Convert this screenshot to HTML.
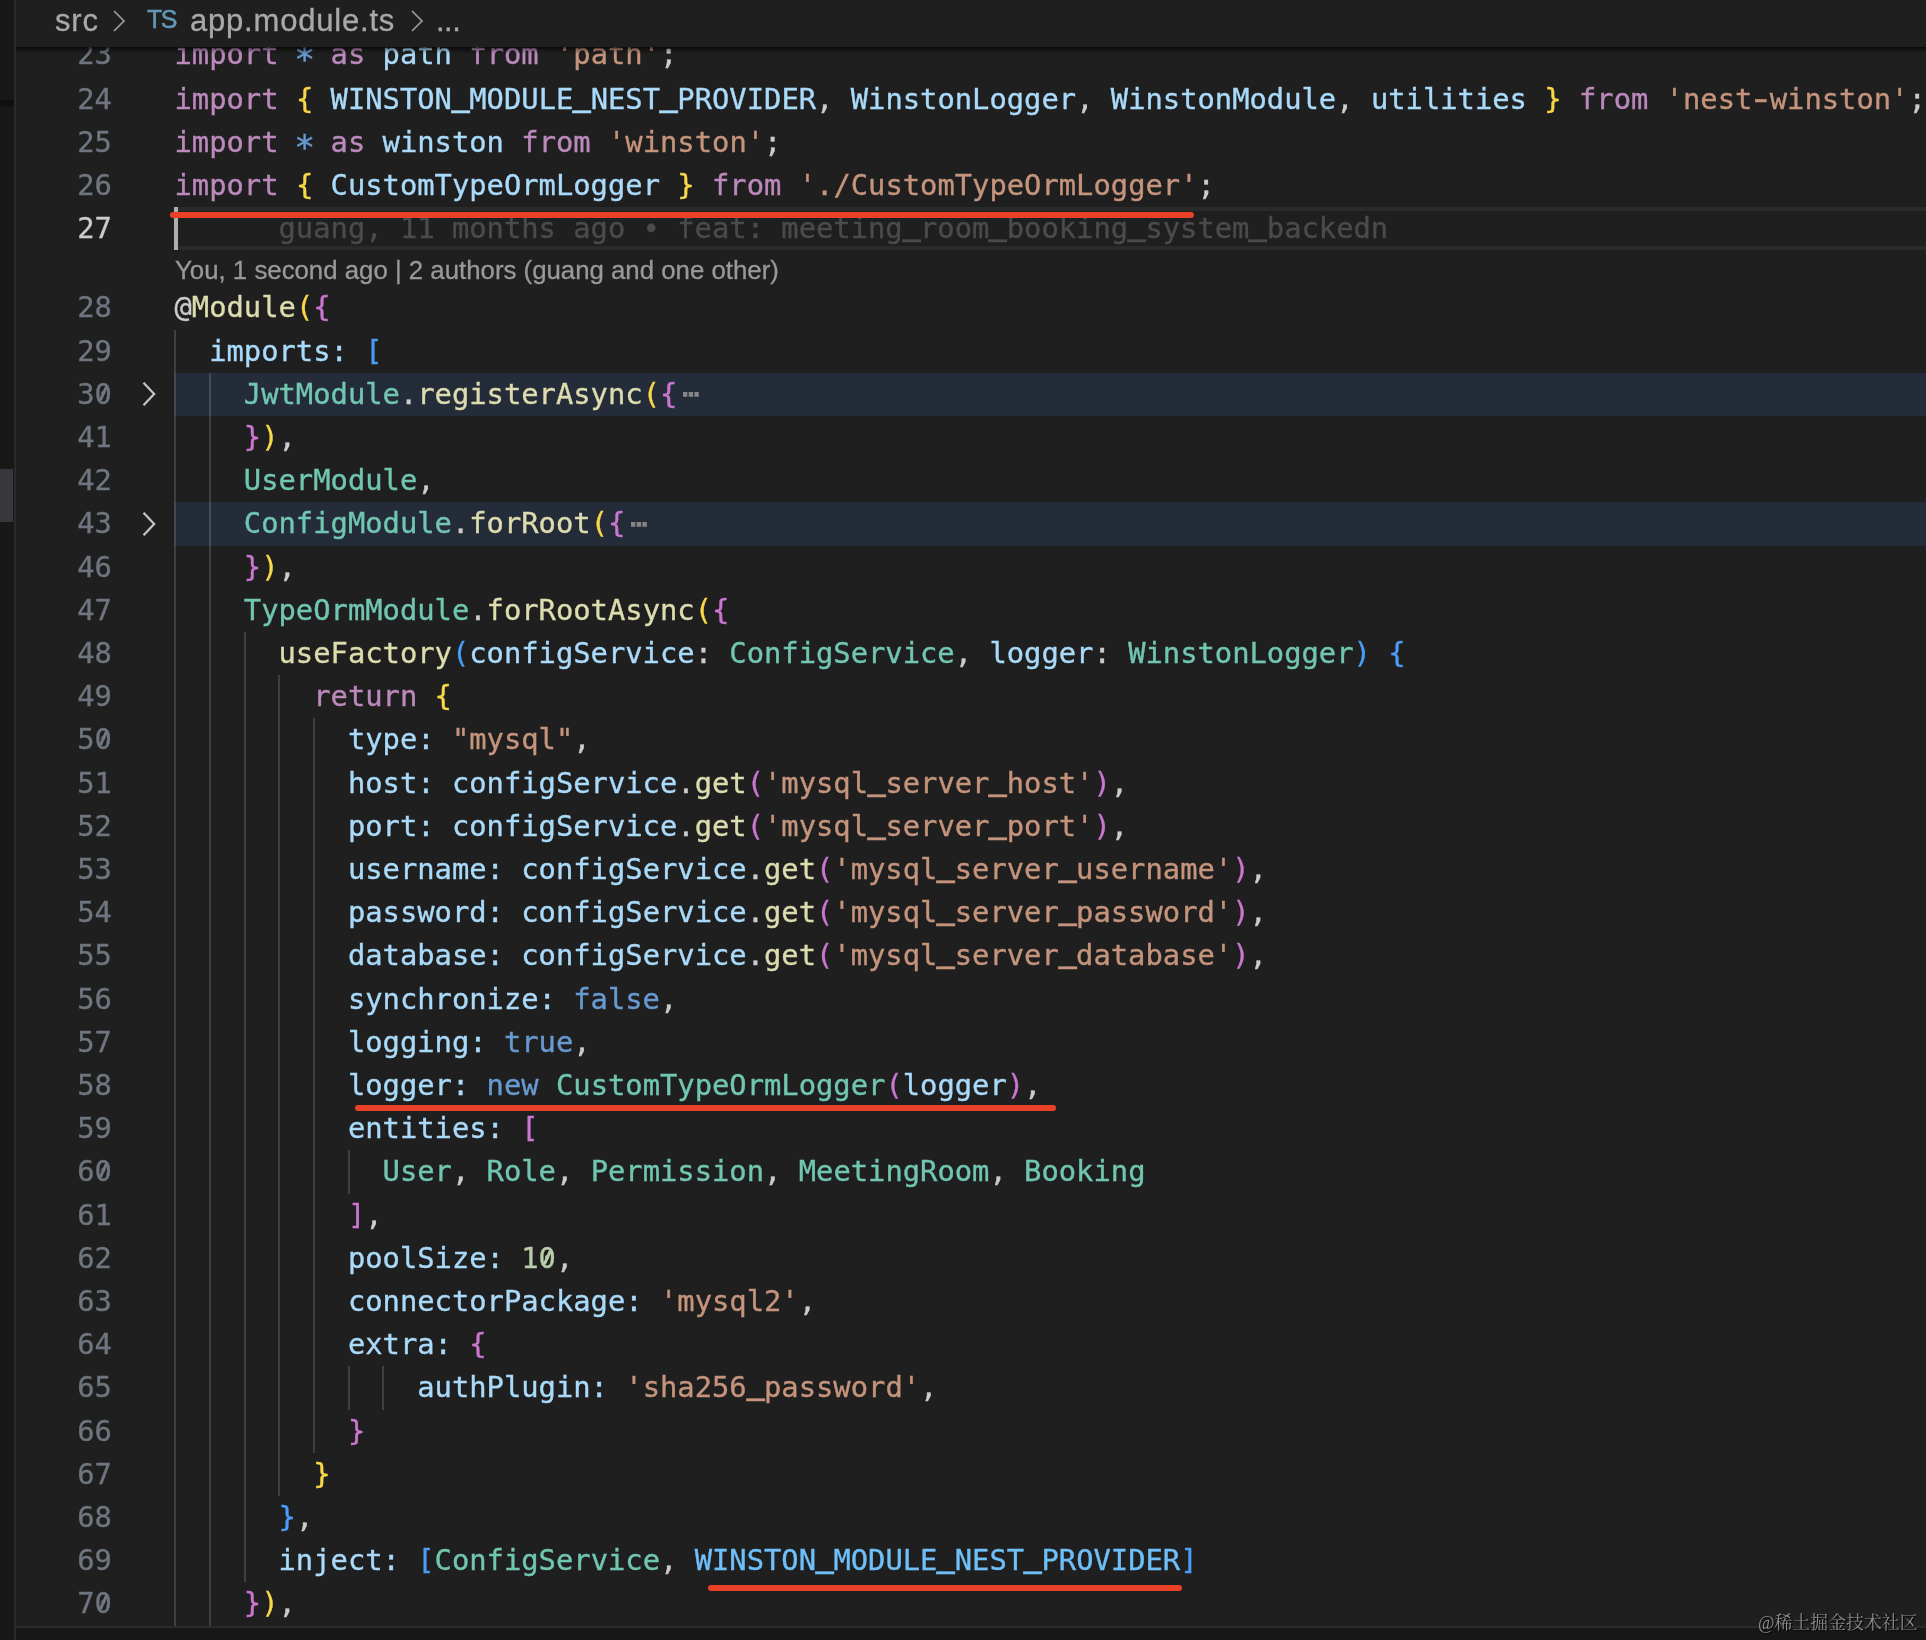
<!DOCTYPE html>
<html lang="en"><head><meta charset="utf-8"><title>app.module.ts</title>
<style>
html,body{margin:0;padding:0;background:#1f1f1f;}
body{width:1926px;height:1640px;position:relative;overflow:hidden;font-family:"DejaVu Sans Mono","Liberation Mono",monospace;}
#side{position:absolute;left:0;top:0;width:14px;height:1640px;background:#181818;border-right:2px solid #2b2b2b;}
#side .hl{position:absolute;left:0;top:100px;width:14px;height:7px;background:linear-gradient(#0e0e0e,#131313);}
#side .blk{position:absolute;left:0;top:469px;width:13px;height:53px;background:#37373d;}
#ed{position:absolute;left:16px;top:0;width:1910px;height:1626px;background:#1f1f1f;overflow:hidden;}
#code{will-change:transform;position:absolute;left:-16px;top:0;width:1926px;height:1626px;}
.row,.ln{z-index:2}
.row{position:absolute;-webkit-text-stroke:0.35px;left:174.5px;height:43.2px;line-height:43.2px;font-size:28.8px;white-space:pre;color:#ccc;letter-spacing:0;}
.ln{position:absolute;-webkit-text-stroke:0.3px;left:39.4px;width:72.5px;height:43.2px;line-height:43.2px;font-size:28.8px;text-align:right;color:#6f7680;}
.ln.cur{color:#ccc;}
.lens{-webkit-text-stroke:0.3px;position:absolute;left:175px;height:35.2px;line-height:39px;font-size:25.8px;color:#999;font-family:"Liberation Sans",sans-serif;white-space:pre;}
.foldbg{z-index:0;position:absolute;left:174px;right:0;height:43.2px;background:#252c39;}
.chev{position:absolute;left:139px;}
.dots{position:absolute;z-index:2;}
.curline{position:absolute;left:174px;right:0;height:43px;box-sizing:border-box;border-top:4px solid #2a2a2a;border-bottom:4px solid #2a2a2a;}
.cursor{position:absolute;left:174px;width:4px;height:43px;background:#aeafad;}
.guide{z-index:1;position:absolute;width:2px;background:rgba(255,255,255,.145);}
.fold{font-style:normal;color:#8b8b8b;font-size:30px;margin-left:3px;-webkit-text-stroke:1px;display:inline-block;line-height:20px;vertical-align:3px;}
.us{font-weight:normal;display:inline-block;transform-origin:50% 39.7px;transform:scale(1.08,2);}
.z{position:relative;display:inline-block;font-weight:normal;}
.z::after{content:"";position:absolute;left:50%;top:20px;width:2.8px;height:14.6px;margin:-7.3px 0 0 -1.4px;background:currentColor;transform:rotate(23.8deg);border-radius:1px;}
.hy{font-weight:normal;display:inline-block;transform:scale(1.5,1.15);}
.as{font-weight:normal;display:inline-block;transform-origin:50% 50%;transform:translateY(5.5px) scale(1.2);}
.k{color:#bc89bd}.v{color:#aadafa}.c{color:#6fbff9}.s{color:#c5947c}.f{color:#dcdcaf}.t{color:#71c6b1}
.b{color:#679ad1}.n{color:#bacdab}.p{color:#ccc}.g{color:#f9d849}.m{color:#cc76d1}.u{color:#4a9df8}.d{color:#4b4b4b}
#bc{will-change:transform;z-index:10;-webkit-text-stroke:0.3px;position:absolute;left:16px;top:0;width:1910px;height:47px;background:#1f1f1f;font-family:"Liberation Sans",sans-serif;color:#a9a9a9;font-size:31px;line-height:42px;letter-spacing:0.8px;}
#bcsh{position:absolute;z-index:9;left:16px;top:47px;width:1910px;height:7px;background:linear-gradient(rgba(0,0,0,.7),rgba(0,0,0,.3) 40%,rgba(0,0,0,0));}
#bc span{position:absolute;top:0;white-space:pre;}
.red{position:absolute;height:6px;border-radius:3px;background:#e84127;z-index:3}
#bottom{z-index:10;position:absolute;left:16px;top:1626px;width:1910px;height:14px;background:#181818;border-top:2px solid #2b2b2b;box-sizing:border-box;}
#wm{will-change:transform;z-index:11;position:absolute;right:8px;top:1607.5px;font-family:"Liberation Serif","Noto Serif CJK SC",serif;font-size:17.9px;line-height:30px;color:#8c8c8c;text-shadow:1px 1px 1px #000;white-space:pre;}
</style></head><body>
<div id="side"><div class="hl"></div><div class="blk"></div></div>
<div id="ed"><div id="code">
<div class="guide " style="left:174.2px;top:329.6px;height:1296.0px"></div>
<div class="guide " style="left:208.9px;top:372.8px;height:1252.8px"></div>
<div class="guide " style="left:243.6px;top:632.0px;height:950.4px"></div>
<div class="guide " style="left:278.2px;top:675.2px;height:820.8px"></div>
<div class="guide " style="left:312.9px;top:718.4px;height:734.4px"></div>
<div class="guide " style="left:347.6px;top:1150.4px;height:43.2px"></div>
<div class="guide " style="left:347.6px;top:1366.4px;height:43.2px"></div>
<div class="guide " style="left:382.3px;top:1366.4px;height:43.2px"></div>
<div class="ln" style="top:33.4px">23</div><div class="row" style="top:33.4px"><span class="k">import</span><span class="p"> </span><span class="b"><b class="as">*</b></span><span class="p"> </span><span class="k">as</span><span class="p"> </span><span class="v">path</span><span class="p"> </span><span class="k">from</span><span class="p"> </span><span class="s">'path'</span><span class="p">;</span></div>
<div class="ln" style="top:77.8px">24</div><div class="row" style="top:77.8px"><span class="k">import</span><span class="p"> </span><span class="g">{</span><span class="p"> </span><span class="v">WINSTON<b class="us">_</b>MODULE<b class="us">_</b>NEST<b class="us">_</b>PROVIDER</span><span class="p">, </span><span class="v">WinstonLogger</span><span class="p">, </span><span class="v">WinstonModule</span><span class="p">, </span><span class="v">utilities</span><span class="p"> </span><span class="g">}</span><span class="p"> </span><span class="k">from</span><span class="p"> </span><span class="s">'nest<b class="hy">-</b>winston'</span><span class="p">;</span></div>
<div class="ln" style="top:121.0px">25</div><div class="row" style="top:121.0px"><span class="k">import</span><span class="p"> </span><span class="b"><b class="as">*</b></span><span class="p"> </span><span class="k">as</span><span class="p"> </span><span class="v">winston</span><span class="p"> </span><span class="k">from</span><span class="p"> </span><span class="s">'winston'</span><span class="p">;</span></div>
<div class="ln" style="top:164.2px">26</div><div class="row" style="top:164.2px"><span class="k">import</span><span class="p"> </span><span class="g">{</span><span class="p"> </span><span class="v">CustomTypeOrmLogger</span><span class="p"> </span><span class="g">}</span><span class="p"> </span><span class="k">from</span><span class="p"> </span><span class="s">'./CustomTypeOrmLogger'</span><span class="p">;</span></div>
<div class="curline" style="top:207px"></div><div class="cursor" style="top:207px"></div><div class="ln cur" style="top:207.4px">27</div><div class="row" style="top:207.4px"><span class="p">      </span><span class="d">guang, 11 months ago • feat: meeting<b class="us">_</b>room<b class="us">_</b>booking<b class="us">_</b>system<b class="us">_</b>backedn</span></div>
<div class="lens" style="top:250.6px">You, 1 second ago | 2 authors (guang and one other)</div>
<div class="ln" style="top:286.4px">28</div><div class="row" style="top:286.4px"><span class="p">@</span><span class="f">Module</span><span class="g">(</span><span class="m">{</span></div>
<div class="ln" style="top:329.6px">29</div><div class="row" style="top:329.6px">  <span class="v">imports:</span><span class="p"> </span><span class="u">[</span></div>
<div class="foldbg" style="top:372.8px"></div><svg class="chev" style="top:379.4px" width="24" height="30" viewBox="0 0 24 30"><path d="M4.5 3.8 L15.2 15 L4.5 26.2" fill="none" stroke="#c5c5c5" stroke-width="2.2"/></svg><svg class="dots" style="left:683.4px;top:392.2px" width="16" height="5" viewBox="0 0 16 5"><rect x="0" y="0" width="4.4" height="4.8" fill="#868686"/><rect x="5.7" y="0" width="4.4" height="4.8" fill="#868686"/><rect x="11.4" y="0" width="4.4" height="4.8" fill="#868686"/></svg><div class="ln" style="top:372.8px">3<b class="z">0</b></div><div class="row" style="top:372.8px">    <span class="t">JwtModule</span><span class="p">.</span><span class="f">registerAsync</span><span class="g">(</span><span class="m">{</span></div>
<div class="ln" style="top:416.0px">41</div><div class="row" style="top:416.0px">    <span class="m">}</span><span class="g">)</span><span class="p">,</span></div>
<div class="ln" style="top:459.2px">42</div><div class="row" style="top:459.2px">    <span class="t">UserModule</span><span class="p">,</span></div>
<div class="foldbg" style="top:502.4px"></div><svg class="chev" style="top:509.0px" width="24" height="30" viewBox="0 0 24 30"><path d="M4.5 3.8 L15.2 15 L4.5 26.2" fill="none" stroke="#c5c5c5" stroke-width="2.2"/></svg><svg class="dots" style="left:631.3px;top:521.8px" width="16" height="5" viewBox="0 0 16 5"><rect x="0" y="0" width="4.4" height="4.8" fill="#868686"/><rect x="5.7" y="0" width="4.4" height="4.8" fill="#868686"/><rect x="11.4" y="0" width="4.4" height="4.8" fill="#868686"/></svg><div class="ln" style="top:502.4px">43</div><div class="row" style="top:502.4px">    <span class="t">ConfigModule</span><span class="p">.</span><span class="f">forRoot</span><span class="g">(</span><span class="m">{</span></div>
<div class="ln" style="top:545.6px">46</div><div class="row" style="top:545.6px">    <span class="m">}</span><span class="g">)</span><span class="p">,</span></div>
<div class="ln" style="top:588.8px">47</div><div class="row" style="top:588.8px">    <span class="t">TypeOrmModule</span><span class="p">.</span><span class="f">forRootAsync</span><span class="g">(</span><span class="m">{</span></div>
<div class="ln" style="top:632.0px">48</div><div class="row" style="top:632.0px">      <span class="f">useFactory</span><span class="u">(</span><span class="v">configService</span><span class="p">: </span><span class="t">ConfigService</span><span class="p">, </span><span class="v">logger</span><span class="p">: </span><span class="t">WinstonLogger</span><span class="u">)</span><span class="p"> </span><span class="u">{</span></div>
<div class="ln" style="top:675.2px">49</div><div class="row" style="top:675.2px">        <span class="k">return</span><span class="p"> </span><span class="g">{</span></div>
<div class="ln" style="top:718.4px">5<b class="z">0</b></div><div class="row" style="top:718.4px">          <span class="v">type:</span><span class="p"> </span><span class="s">"mysql"</span><span class="p">,</span></div>
<div class="ln" style="top:761.6px">51</div><div class="row" style="top:761.6px">          <span class="v">host:</span><span class="p"> </span><span class="v">configService</span><span class="p">.</span><span class="f">get</span><span class="m">(</span><span class="s">'mysql<b class="us">_</b>server<b class="us">_</b>host'</span><span class="m">)</span><span class="p">,</span></div>
<div class="ln" style="top:804.8px">52</div><div class="row" style="top:804.8px">          <span class="v">port:</span><span class="p"> </span><span class="v">configService</span><span class="p">.</span><span class="f">get</span><span class="m">(</span><span class="s">'mysql<b class="us">_</b>server<b class="us">_</b>port'</span><span class="m">)</span><span class="p">,</span></div>
<div class="ln" style="top:848.0px">53</div><div class="row" style="top:848.0px">          <span class="v">username:</span><span class="p"> </span><span class="v">configService</span><span class="p">.</span><span class="f">get</span><span class="m">(</span><span class="s">'mysql<b class="us">_</b>server<b class="us">_</b>username'</span><span class="m">)</span><span class="p">,</span></div>
<div class="ln" style="top:891.2px">54</div><div class="row" style="top:891.2px">          <span class="v">password:</span><span class="p"> </span><span class="v">configService</span><span class="p">.</span><span class="f">get</span><span class="m">(</span><span class="s">'mysql<b class="us">_</b>server<b class="us">_</b>password'</span><span class="m">)</span><span class="p">,</span></div>
<div class="ln" style="top:934.4px">55</div><div class="row" style="top:934.4px">          <span class="v">database:</span><span class="p"> </span><span class="v">configService</span><span class="p">.</span><span class="f">get</span><span class="m">(</span><span class="s">'mysql<b class="us">_</b>server<b class="us">_</b>database'</span><span class="m">)</span><span class="p">,</span></div>
<div class="ln" style="top:977.6px">56</div><div class="row" style="top:977.6px">          <span class="v">synchronize:</span><span class="p"> </span><span class="b">false</span><span class="p">,</span></div>
<div class="ln" style="top:1020.8px">57</div><div class="row" style="top:1020.8px">          <span class="v">logging:</span><span class="p"> </span><span class="b">true</span><span class="p">,</span></div>
<div class="ln" style="top:1064.0px">58</div><div class="row" style="top:1064.0px">          <span class="v">logger:</span><span class="p"> </span><span class="b">new</span><span class="p"> </span><span class="t">CustomTypeOrmLogger</span><span class="m">(</span><span class="v">logger</span><span class="m">)</span><span class="p">,</span></div>
<div class="ln" style="top:1107.2px">59</div><div class="row" style="top:1107.2px">          <span class="v">entities:</span><span class="p"> </span><span class="m">[</span></div>
<div class="ln" style="top:1150.4px">6<b class="z">0</b></div><div class="row" style="top:1150.4px">            <span class="t">User</span><span class="p">, </span><span class="t">Role</span><span class="p">, </span><span class="t">Permission</span><span class="p">, </span><span class="t">MeetingRoom</span><span class="p">, </span><span class="t">Booking</span></div>
<div class="ln" style="top:1193.6px">61</div><div class="row" style="top:1193.6px">          <span class="m">]</span><span class="p">,</span></div>
<div class="ln" style="top:1236.8px">62</div><div class="row" style="top:1236.8px">          <span class="v">poolSize:</span><span class="p"> </span><span class="n">1<b class="z">0</b></span><span class="p">,</span></div>
<div class="ln" style="top:1280.0px">63</div><div class="row" style="top:1280.0px">          <span class="v">connectorPackage:</span><span class="p"> </span><span class="s">'mysql2'</span><span class="p">,</span></div>
<div class="ln" style="top:1323.2px">64</div><div class="row" style="top:1323.2px">          <span class="v">extra:</span><span class="p"> </span><span class="m">{</span></div>
<div class="ln" style="top:1366.4px">65</div><div class="row" style="top:1366.4px">              <span class="v">authPlugin:</span><span class="p"> </span><span class="s">'sha256<b class="us">_</b>password'</span><span class="p">,</span></div>
<div class="ln" style="top:1409.6px">66</div><div class="row" style="top:1409.6px">          <span class="m">}</span></div>
<div class="ln" style="top:1452.8px">67</div><div class="row" style="top:1452.8px">        <span class="g">}</span></div>
<div class="ln" style="top:1496.0px">68</div><div class="row" style="top:1496.0px">      <span class="u">}</span><span class="p">,</span></div>
<div class="ln" style="top:1539.2px">69</div><div class="row" style="top:1539.2px">      <span class="v">inject:</span><span class="p"> </span><span class="u">[</span><span class="t">ConfigService</span><span class="p">, </span><span class="c">WINSTON<b class="us">_</b>MODULE<b class="us">_</b>NEST<b class="us">_</b>PROVIDER</span><span class="u">]</span></div>
<div class="ln" style="top:1582.4px">7<b class="z">0</b></div><div class="row" style="top:1582.4px">    <span class="m">}</span><span class="g">)</span><span class="p">,</span></div><div class="red" style="left:170px;top:212.4px;width:1024px"></div>
<div class="red" style="left:355px;top:1105px;width:701px"></div>
<div class="red" style="left:707.5px;top:1585px;width:474px"></div>
</div></div>
<div id="bcsh"></div>
<div id="bc"><span style="left:39px">src</span><svg style="position:absolute;left:94.5px;top:9px" width="16" height="24" viewBox="0 0 16 24"><path d="M3 2 L13 12 L3 22" fill="none" stroke="#9c9c9c" stroke-width="1.7"/></svg><span style="left:131px;color:#6398b7;font-size:25px;letter-spacing:-1.5px;-webkit-text-stroke:0.5px;top:-2px">TS</span><span style="left:174px">app.module.ts</span><svg style="position:absolute;left:393px;top:9px" width="16" height="24" viewBox="0 0 16 24"><path d="M3 2 L13 12 L3 22" fill="none" stroke="#9c9c9c" stroke-width="1.7"/></svg><span style="left:420px;letter-spacing:-0.5px">...</span></div>
<div id="bottom"></div>
<div id="wm">@稀土掘金技术社区</div>
</body></html>
